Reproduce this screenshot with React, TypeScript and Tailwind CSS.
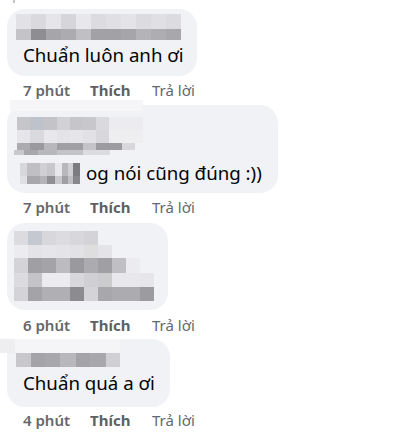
import React from "react";

const FONT = '"Noto Sans", "Open Sans", sans-serif';

const B = ({ c }: { c: string }) => <div className={c} />;

function Meta({ time, className }: { time: string; className: string }) {
  return (
    <div
      className={`flex items-center h-[18px] pl-[23px] text-[15px] leading-[18px] text-[#65676b] ${className}`}
      style={{ fontFamily: FONT }}
    >
      <span className="w-[67px] shrink-0 font-semibold">{time}</span>
      <span className="w-[62px] shrink-0 font-bold text-[#5e6064]">Thích</span>
      <span className="shrink-0 font-normal">Trả lời</span>
    </div>
  );
}

export default function App() {
  return (
    <div
      className="w-[411px] h-[446px] bg-white overflow-hidden flex flex-col items-start"
      style={{ fontFamily: FONT }}
    >
      {/* top cut-off mark */}
      <div className="h-[9px] w-full">
        <div className="ml-[13px] w-[2px] h-[3px] bg-[#c4c4c4]" />
      </div>

      {/* Bubble 1 */}
      <div className="ml-[7px] w-[190px] h-[67px] rounded-[18px] bg-[#f0f2f5] px-4 pt-[5px] flex flex-col">
        <div className="ml-[-7px] flex flex-col">
          <div className="flex h-[15px]">
            <B c="w-[15px] bg-[#e2e2e6]" />
            <B c="w-[15px] bg-[#dadade]" />
            <B c="w-[15px] bg-[#e6e6ea]" />
            <B c="w-[15px] bg-[#d6d6da]" />
            <B c="w-[15px] bg-[#e8e8ec]" />
            <B c="w-[15px] bg-[#dcdce0]" />
            <B c="w-[15px] bg-[#e0e0e4]" />
            <B c="w-[15px] bg-[#e4e4e8]" />
            <B c="w-[15px] bg-[#dcdce0]" />
            <B c="w-[15px] bg-[#e0e0e4]" />
            <B c="w-[15px] bg-[#dcdce0]" />
          </div>
          <div className="flex h-[11px]">
            <B c="w-[15px] bg-[#c4c4c8]" />
            <B c="w-[15px] bg-[#8e8e92]" />
            <B c="w-[15px] bg-[#a6a6aa]" />
            <B c="w-[15px] bg-[#acacb0]" />
            <B c="w-[15px] bg-[#c0c0c4]" />
            <B c="w-[15px] bg-[#a2a2a6]" />
            <B c="w-[15px] bg-[#a2a2a6]" />
            <B c="w-[15px] bg-[#a6a6aa]" />
            <B c="w-[15px] bg-[#b4b4b8]" />
            <B c="w-[15px] bg-[#aeaeb2]" />
            <B c="w-[15px] bg-[#a8a8ac]" />
          </div>
        </div>
        <div className="mt-[3px] h-[24px] text-[18.7px] leading-[24px] text-[#050505] whitespace-nowrap">
          Chuẩn luôn anh ơi
        </div>
      </div>
      <Meta time="7 phút" className="mt-[5px]" />

      {/* Bubble 2 */}
      <div className="mt-[6px] ml-[7px] w-[271px] h-[88px] rounded-[18px] bg-[#f0f2f5] px-4 flex flex-col">
        <div className="mt-[-5px] ml-[-13px] h-[11px] w-[133px] bg-[#f6f6f8]" />
        <div className="h-[6px]" />
        <div className="ml-[-6px] flex flex-col">
          <div className="flex h-[13px]">
            <B c="w-[13px] bg-[#c6c6ca]" />
            <B c="w-[14px] bg-[#bec2ca]" />
            <B c="w-[13px] bg-[#c4c4c8]" />
            <B c="w-[13px] bg-[#d2d2d6]" />
            <B c="w-[13px] bg-[#c6c6ca]" />
            <B c="w-[13px] bg-[#c8c8cc]" />
            <B c="w-[13px] bg-[#dadade]" />
            <B c="w-[34px] bg-[#ececf0]" />
          </div>
          <div className="flex h-[13px]">
            <B c="w-[13px] bg-[#e6e6ea]" />
            <B c="w-[14px] bg-[#dadade]" />
            <B c="w-[13px] bg-[#e8e8ec]" />
            <B c="w-[13px] bg-[#e4e4e8]" />
            <B c="w-[13px] bg-[#e6e6ea]" />
            <B c="w-[13px] bg-[#e2e2e6]" />
            <B c="w-[13px] bg-[#d8d8dc]" />
            <B c="w-[34px] bg-[#eeeef0]" />
          </div>
          <div className="flex h-[7px]">
            <B c="w-[13px] bg-[#acacb0]" />
            <B c="w-[14px] bg-[#9a9a9e]" />
            <B c="w-[13px] bg-[#b8b8bc]" />
            <B c="w-[26px] bg-[#a0a0a4]" />
            <B c="w-[13px] bg-[#c4c4c8]" />
            <B c="w-[26px] bg-[#9c9ca0]" />
            <B c="w-[13px] bg-[#d8d8dc]" />
          </div>
        </div>
        <div className="ml-[-9px] flex h-[5px]">
          <B c="w-[10px] bg-[#c8c8cc]" />
          <B c="w-[14px] bg-[#a8a8ac]" />
          <B c="w-[19px] bg-[#b8b8bc]" />
          <B c="w-[26px] bg-[#c4c4c8]" />
          <B c="w-[27px] bg-[#dcdce0]" />
        </div>
        <div className="h-[6px]" />
        <div className="h-[24px] flex items-center whitespace-nowrap">
          <div className="ml-[-3px] flex flex-col">
            <div className="flex h-[13px]">
              <B c="w-[7px] bg-[#d8d8dc]" />
              <B c="w-[13px] bg-[#c0c0c4]" />
              <B c="w-[7px] bg-[#d0d0d4]" />
              <B c="w-[8px] bg-[#c8c8cc]" />
              <B c="w-[7px] bg-[#e8e8ec]" />
              <B c="w-[6px] bg-[#b8b8bc]" />
              <B c="w-[5px] bg-[#d0d0d4]" />
              <B c="w-[7px] bg-[#7c7c80]" />
            </div>
            <div className="flex h-[8px]">
              <B c="w-[7px] bg-[#e0e0e4]" />
              <B c="w-[13px] bg-[#a8a8ac]" />
              <B c="w-[7px] bg-[#b4b4b8]" />
              <B c="w-[8px] bg-[#909094]" />
              <B c="w-[7px] bg-[#c8c8cc]" />
              <B c="w-[6px] bg-[#a0a0a4]" />
              <B c="w-[5px] bg-[#c0c0c4]" />
              <B c="w-[7px] bg-[#88888c]" />
            </div>
          </div>
          <span className="ml-[6px] text-[18.7px] leading-[24px] text-[#050505]">
            og nói cũng đúng :))
          </span>
        </div>
      </div>
      <Meta time="7 phút" className="mt-[5px]" />

      {/* Bubble 3 */}
      <div className="mt-[7px] ml-[7px] w-[161px] h-[87px] rounded-[18px] bg-[#f0f2f5] px-[7px] pt-[8px] flex flex-col">
        <div className="flex h-[14px]">
          <B c="w-[14px] bg-[#dcdce0]" />
          <B c="w-[14px] bg-[#c4c8d0]" />
          <B c="w-[14px] bg-[#d8d8dc]" />
          <B c="w-[14px] bg-[#dcdce0]" />
          <B c="w-[14px] bg-[#d8d8dc]" />
          <B c="w-[14px] bg-[#d4d4d8]" />
        </div>
        <div className="flex h-[13px]">
          <B c="w-[14px] bg-[#ececf0]" />
          <B c="w-[14px] bg-[#e4e4e8]" />
          <B c="w-[14px] bg-[#e6e6ea]" />
          <B c="w-[14px] bg-[#e4e4e8]" />
          <B c="w-[14px] bg-[#e2e2e6]" />
          <B c="w-[14px] bg-[#dededf]" />
          <B c="w-[14px] bg-[#e4e4e8]" />
        </div>
        <div className="flex h-[15px]">
          <B c="w-[14px] bg-[#d4d4d8]" />
          <B c="w-[14px] bg-[#a0a0a4]" />
          <B c="w-[14px] bg-[#a4a4a8]" />
          <B c="w-[14px] bg-[#bcbcc0]" />
          <B c="w-[14px] bg-[#9a9a9e]" />
          <B c="w-[14px] bg-[#acacb0]" />
          <B c="w-[14px] bg-[#a0a0a4]" />
          <B c="w-[14px] bg-[#c0c0c4]" />
          <B c="w-[14px] bg-[#ececf0]" />
        </div>
        <div className="flex h-[14px]">
          <B c="w-[14px] bg-[#dcdce0]" />
          <B c="w-[14px] bg-[#c4c4c8]" />
          <B c="w-[14px] bg-[#ececf0]" />
          <B c="w-[14px] bg-[#ececf0]" />
          <B c="w-[14px] bg-[#d8d8dc]" />
          <B c="w-[14px] bg-[#d0d0d4]" />
          <B c="w-[14px] bg-[#cccccf]" />
          <B c="w-[14px] bg-[#e8e8ec]" />
          <B c="w-[14px] bg-[#e8e8ec]" />
          <B c="w-[14px] bg-[#e6e6ea]" />
        </div>
        <div className="flex h-[14px]">
          <B c="w-[14px] bg-[#d4d4d8]" />
          <B c="w-[14px] bg-[#a4a4a8]" />
          <B c="w-[14px] bg-[#b0b0b4]" />
          <B c="w-[14px] bg-[#b0b0b4]" />
          <B c="w-[14px] bg-[#8c8c90]" />
          <B c="w-[14px] bg-[#d4d4d8]" />
          <B c="w-[14px] bg-[#a8a8ac]" />
          <B c="w-[14px] bg-[#acacb0]" />
          <B c="w-[14px] bg-[#acacb0]" />
          <B c="w-[14px] bg-[#9c9ca0]" />
        </div>
      </div>
      <Meta time="6 phút" className="mt-[6px]" />

      {/* Bubble 4 */}
      <div className="mt-[5px] ml-[7px] w-[163px] h-[68px] rounded-[18px] bg-[#f0f2f5] px-4 flex flex-col">
        <div className="ml-[-23px] flex h-[14px]">
          <B c="w-[15px] bg-[#eeeef0]" />
          <B c="w-[105px] bg-[#f5f5f7]" />
        </div>
        <div className="ml-[-7px] flex h-[14px]">
          <B c="w-[15px] bg-[#c8c8cc]" />
          <B c="w-[14px] bg-[#a4a4a8]" />
          <B c="w-[15px] bg-[#a8a8ac]" />
          <B c="w-[16px] bg-[#b8b8bc]" />
          <B c="w-[14px] bg-[#a4a4a8]" />
          <B c="w-[16px] bg-[#a8a8ac]" />
          <B c="w-[14px] bg-[#d0d0d4]" />
        </div>
        <div className="h-[4px]" />
        <div className="h-[24px] text-[18.7px] leading-[24px] text-[#050505] whitespace-nowrap">
          Chuẩn quá a ơi
        </div>
      </div>
      <Meta time="4 phút" className="mt-[4px]" />
    </div>
  );
}
